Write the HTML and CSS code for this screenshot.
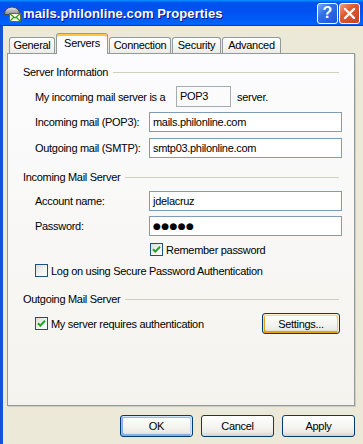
FILE: index.html
```html
<!DOCTYPE html>
<html>
<head>
<meta charset="utf-8">
<title>mails.philonline.com Properties</title>
<link rel="stylesheet" href="styles.css">
</head>
<body>
<div class="window">
  <div class="titlebar">
    <svg class="app-icon" viewBox="0 0 19 18" width="19" height="18">
      <defs>
        <linearGradient id="dome" x1="0" y1="0" x2="0" y2="1">
          <stop offset="0" stop-color="#e6e6e6"/>
          <stop offset="1" stop-color="#8a8a8a"/>
        </linearGradient>
      </defs>
      <path d="M1.5 9.5 Q1.5 2.5 9 2 Q16.5 2.5 16.5 9.5 Z" fill="url(#dome)" stroke="#4a4a4a" stroke-width="1"/>
      <rect x="6.5" y="8.5" width="11" height="8" fill="#fffbe0" stroke="#6f6530" stroke-width="1"/>
      <path d="M6.5 8.5 L12 13 L17.5 8.5 M6.5 16.5 L10.5 12.5 M17.5 16.5 L13.5 12.5" fill="none" stroke="#2f9a2f" stroke-width="1.2"/>
    </svg>
    <span class="title">mails.philonline.com Properties</span>
    <div class="tb-buttons">
      <div class="tb-btn help">?</div>
      <div class="tb-btn close">
        <svg viewBox="0 0 19 19" width="19" height="19"><path d="M5 5 L14 14 M14 5 L5 14" stroke="#fff" stroke-width="2.4" stroke-linecap="round"/></svg>
      </div>
    </div>
  </div>
  <div class="frame">
    <div class="tabs">
      <div class="tab tab-general">General</div>
      <div class="tab tab-servers active">Servers</div>
      <div class="tab tab-connection">Connection</div>
      <div class="tab tab-security">Security</div>
      <div class="tab tab-advanced">Advanced</div>
    </div>
    <div class="panel">
      <div class="group g1"><span>Server Information</span><i class="rule"></i></div>
      <div class="row r-type">
        <span class="label-wide">My incoming mail server is a</span>
        <div class="static">POP3</div>
        <span class="suffix">server.</span>
      </div>
      <div class="row r-in"><span class="label">Incoming mail (POP3):</span><div class="field">mails.philonline.com</div></div>
      <div class="row r-out"><span class="label">Outgoing mail (SMTP):</span><div class="field">smtp03.philonline.com</div></div>

      <div class="group g2"><span>Incoming Mail Server</span><i class="rule"></i></div>
      <div class="row r-acct"><span class="label">Account name:</span><div class="field">jdelacruz</div></div>
      <div class="row r-pass"><span class="label">Password:</span><div class="field dots">●●●●●</div></div>
      <div class="row check-row r-remember">
        <span class="checkbox checked"><svg viewBox="0 0 11 11" width="11" height="11"><path d="M2 5.2 L4.3 7.6 L9 2.8" fill="none" stroke="#21a121" stroke-width="2"/></svg></span>
        <span class="check-label">Remember password</span>
      </div>
      <div class="row check-row r-spa">
        <span class="checkbox"></span>
        <span class="check-label">Log on using Secure Password Authentication</span>
      </div>

      <div class="group g3"><span>Outgoing Mail Server</span><i class="rule"></i></div>
      <div class="row r-auth">
        <span class="checkbox checked"><svg viewBox="0 0 11 11" width="11" height="11"><path d="M2 5.2 L4.3 7.6 L9 2.8" fill="none" stroke="#21a121" stroke-width="2"/></svg></span>
        <span class="check-label">My server requires authentication</span>
        <div class="btn hot settings">Settings...</div>
      </div>
    </div>
    <div class="actions">
      <div class="btn default">OK</div>
      <div class="btn">Cancel</div>
      <div class="btn">Apply</div>
    </div>
  </div>
</div>
</body>
</html>
```
FILE: styles.css
```css
* { box-sizing: border-box; }
html, body { margin: 0; padding: 0; }
body {
  width: 363px;
  height: 444px;
  overflow: hidden;
  background: #ece9d8;
  font-family: "Liberation Sans", Arial, sans-serif;
  font-size: 11px;
  letter-spacing: -0.3px;
  color: #000;
}
.window { display: flex; flex-direction: column; height: 444px; }

/* title bar */
.titlebar {
  height: 26px;
  flex: none;
  display: flex;
  align-items: center;
  padding-left: 3px;
  background: linear-gradient(180deg, #0997ff 0%, #0053ee 10%, #0050ee 40%, #0060f8 85%, #0066ff 92%, #005bff 95%, #003dd7 97%, #003dd7 100%);
}
.app-icon { flex: none; margin-right: 1px; margin-top: 1px; }
.title {
  color: #fff;
  font-weight: bold;
  font-size: 13px;
  letter-spacing: 0.1px;
  text-shadow: 1px 1px #0f1089;
  white-space: nowrap;
}
.tb-buttons { margin-left: auto; display: flex; gap: 1px; padding-right: 3px; }
.tb-btn {
  width: 21px;
  height: 21px;
  border: 1px solid #fff;
  border-radius: 3px;
  display: flex;
  align-items: center;
  justify-content: center;
  color: #fff;
}
.help {
  background: linear-gradient(135deg, #7aa7f7 0%, #2f6ee8 40%, #1c56d8 100%);
  font: bold 16px "Liberation Sans", Arial, sans-serif;
  letter-spacing: 0;
}
.close { background: linear-gradient(135deg, #f0a08a 0%, #e2582f 40%, #c8431f 100%); }

/* frame */
.frame {
  flex: 1;
  border-left: 3px solid #1453d6;
  padding: 7px 0 0 4px;
  display: flex;
  flex-direction: column;
}

/* tabs */
.tabs {
  display: flex;
  align-items: flex-end;
  gap: 1px;
  height: 20px;
  margin-left: 2px;
  position: relative;
  z-index: 1;
}
.tab {
  height: 16px;
  border: 1px solid #919b9c;
  border-bottom: none;
  border-radius: 3px 3px 0 0;
  background: linear-gradient(180deg, #ffffff 0%, #f6f6f3 50%, #ecebe6 100%);
  text-align: center;
  line-height: 15px;
  white-space: nowrap;
}
.tab-general { width: 46px; }
.tab-servers { width: 52px; }
.tab-connection { width: 62px; }
.tab-security { width: 49px; }
.tab-advanced { width: 59px; }
.tab.active {
  height: 21px;
  margin-bottom: -1px;
  background: #fcfcfe;
  border-top: 1px solid #e68b2c;
  box-shadow: inset 0 2px 0 #ffc73c;
  line-height: 18px;
}

/* panel */
.panel {
  width: 348px;
  height: 353px;
  flex: none;
  border: 1px solid #919b9c;
  background: linear-gradient(180deg, #fcfcfe 0%, #f4f3ee 100%);
  box-shadow: 1px 1px 0 #d0cec3;
  padding: 0 12px 0 15px;
  display: flex;
  flex-direction: column;
}
.group { display: flex; align-items: center; height: 14px; }
.group .rule { flex: 1; height: 1px; background: #d0d0bf; margin: 0 3px 0 5px; }
.g1 { margin-top: 11px; }
.g2 { margin-top: 12px; }
.g3 { margin-top: 15px; }

.row { display: flex; align-items: center; padding-left: 12px; }
.label { width: 114px; flex: none; white-space: nowrap; }
.label-wide { width: 141px; flex: none; white-space: nowrap; }
.static {
  width: 55px;
  height: 21px;
  border: 1px solid #a5acb2;
  padding-left: 3px;
  line-height: 19px;
}
.suffix { margin-left: 6px; }
.field {
  flex: 1;
  height: 20px;
  border: 1px solid #7f9db9;
  background: #fff;
  padding-left: 3px;
  line-height: 18px;
  white-space: nowrap;
}
.dots { font-family: "DejaVu Sans", sans-serif; font-size: 9px; letter-spacing: 0.4px; }

.r-type { margin-top: 7px; height: 21px; }
.r-in { margin-top: 5px; }
.r-out { margin-top: 6px; }
.r-acct { margin-top: 7px; }
.r-pass { margin-top: 5px; }
.r-remember { margin-top: 7px; padding-left: 127px; }
.r-spa { margin-top: 8px; }
.r-auth { margin-top: 7px; height: 21px; }

.check-row { height: 13px; }
.checkbox {
  width: 13px;
  height: 13px;
  flex: none;
  border: 1px solid #1c5180;
  background: linear-gradient(135deg, #dcdcd7 0%, #f5f5f3 60%, #ffffff 100%);
  display: flex;
  align-items: center;
  justify-content: center;
}
.check-label { margin-left: 3px; white-space: nowrap; }

/* buttons */
.btn {
  width: 73px;
  height: 22px;
  border: 1px solid #003c74;
  border-radius: 3px;
  background: linear-gradient(180deg, #ffffff 0%, #f4f4f0 55%, #ecebe6 80%, #d6d0c5 100%);
  display: flex;
  align-items: center;
  justify-content: center;
  white-space: nowrap;
}
.btn.default {
  box-shadow: inset -1px 1px #cee7ff, inset 1px 2px #98b8ea, inset -2px 2px #bcd4f6, inset 1px -1px #89ade4, inset 2px -2px #89ade4;
}
.btn.hot {
  box-shadow: inset -1px 1px #fff0cf, inset 1px 2px #fdd889, inset -2px 2px #fbc761, inset 2px -2px #e5a01a;
}
.settings { width: 78px; height: 21px; margin-left: auto; margin-right: 2px; }
.actions {
  display: flex;
  justify-content: flex-end;
  gap: 8px;
  margin-top: 9px;
  padding-right: 8px;
}
```
